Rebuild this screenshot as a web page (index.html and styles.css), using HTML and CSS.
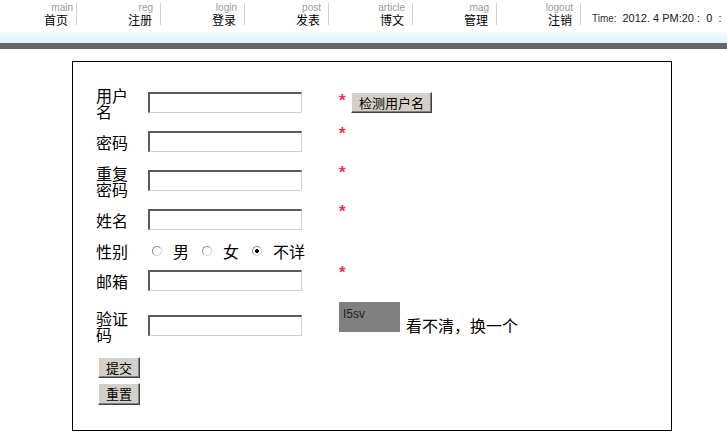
FILE: index.html
```html
<!DOCTYPE html>
<html lang="zh-CN">
<head>
<meta charset="utf-8">
<title>注册</title>
<link rel="stylesheet" href="styles.css">
</head>
<body>
<div class="topbar">
  <div class="nav-item first"><div class="nav-en">main</div><div class="nav-zh">首页</div></div>
  <div class="nav-item"><div class="nav-en">reg</div><div class="nav-zh">注册</div></div>
  <div class="nav-item"><div class="nav-en">login</div><div class="nav-zh">登录</div></div>
  <div class="nav-item"><div class="nav-en">post</div><div class="nav-zh">发表</div></div>
  <div class="nav-item"><div class="nav-en">article</div><div class="nav-zh">博文</div></div>
  <div class="nav-item"><div class="nav-en">mag</div><div class="nav-zh">管理</div></div>
  <div class="nav-item"><div class="nav-en">logout</div><div class="nav-zh">注销</div></div>
  <div class="clock">Time: <span class="clock-val">2012. 4 PM:20 :&nbsp; 0&nbsp; :</span></div>
</div>
<div class="band"></div>
<div class="bar"></div>

<div class="panel">
  <form class="form-grid">
    <div class="field-label">用户名</div>
    <input class="text-input" type="text">
    <div class="hint hint-mid"><span class="star star-btn">*</span> <button type="button" class="btn btn-check">检测用户名</button></div>

    <div class="field-label">密码</div>
    <input class="text-input" type="password">
    <div class="hint"><span class="star">*</span></div>

    <div class="field-label">重复密码</div>
    <input class="text-input" type="password">
    <div class="hint"><span class="star">*</span></div>

    <div class="field-label">姓名</div>
    <input class="text-input" type="text">
    <div class="hint"><span class="star">*</span></div>

    <div class="field-label">性别</div>
    <div class="gender">
      <label class="opt"><input class="radio" type="radio" name="sex">男</label>
      <label class="opt"><input class="radio" type="radio" name="sex">女</label>
      <label class="opt"><input class="radio" type="radio" name="sex" checked>不详</label>
    </div>

    <div class="field-label">邮箱</div>
    <input class="text-input" type="text">
    <div class="hint hint-tight"><span class="star">*</span></div>

    <div class="field-label">验证码</div>
    <input class="text-input" type="text">
    <div class="captcha-cell"><span class="captcha">I5sv</span><span class="refresh">看不清，换一个</span></div>
  </form>
  <div class="actions">
    <button type="button" class="btn">提交</button>
    <button type="button" class="btn btn-second">重置</button>
  </div>
</div>
</body>
</html>
```

FILE: styles.css
```css
html, body {
  margin: 0;
  padding: 0;
  background: #fff;
}

body {
  font-family: "Liberation Sans", "Noto Sans CJK SC", sans-serif;
  color: #000;
}

/* ---------- header ---------- */
.topbar {
  display: flex;
  height: 32px;
}

.nav-item {
  flex: none;
  width: 83px;
  height: 22px;
  margin-top: 3px;
  border-right: 1px solid #cfcfcf;
  text-align: right;
}

.nav-item.first {
  width: 76px;
}

.nav-en {
  font-family: "Liberation Sans", sans-serif;
  font-size: 10px;
  line-height: 9px;
  color: #9a9a9a;
  padding-right: 7px;
}

.nav-item.first .nav-en {
  padding-right: 3px;
}

.nav-zh {
  font-family: "Noto Sans CJK SC", sans-serif;
  font-size: 12px;
  line-height: 12px;
  margin-top: 2px;
  padding-right: 8px;
  color: #000;
}

.clock {
  flex: none;
  margin: 13px 0 0 11px;
  font-family: "Liberation Sans", sans-serif;
  font-size: 10px;
  line-height: 10px;
  color: #333;
  white-space: nowrap;
}

.clock-val {
  margin-left: 3px;
  font-size: 11px;
  color: #14142a;
}

.band {
  height: 11px;
  background: linear-gradient(#f6fcfe, #dcf4fb);
}

.bar {
  height: 6px;
  background: #666;
}

/* ---------- panel ---------- */
.panel {
  box-sizing: border-box;
  width: 600px;
  height: 370px;
  margin: 12px 0 0 72px;
  border: 1px solid #000;
  padding: 21px 0 0 23px;
}

.form-grid {
  display: grid;
  grid-template-columns: 52px 191px auto;
  grid-template-rows: 39px 39px 39px 39px 23px 37px 53px;
  margin: 0;
}

.field-label {
  align-self: center;
  width: 34px;
  font-family: "Noto Sans CJK SC", sans-serif;
  font-size: 16px;
  line-height: 16px;
}

.text-input {
  align-self: center;
  justify-self: start;
  box-sizing: border-box;
  width: 154px;
  height: 21px;
  margin: 0;
  padding: 0 2px;
  border-style: solid;
  border-width: 2px 1px 1px 2px;
  border-color: #5a5a5a #d4d0c8 #d4d0c8 #5a5a5a;
  background: #fff;
  outline: none;
}

.hint {
  align-self: start;
  padding-top: 3px;
  line-height: 18px;
}

.hint-mid {
  align-self: center;
  padding-top: 0;
  white-space: nowrap;
}

.hint-tight {
  padding-top: 2px;
}

.star {
  font-family: "Liberation Sans", sans-serif;
  font-size: 17px;
  font-weight: bold;
  line-height: 18px;
  color: #f2334d;
}

.star-btn {
  position: relative;
  top: -2px;
}

.btn {
  box-sizing: border-box;
  height: 21px;
  margin: 0;
  padding: 0 7px;
  font-family: "Noto Sans CJK SC", sans-serif;
  font-size: 13px;
  line-height: 18px;
  color: #000;
  background: #d4d0c8;
  border: 1px solid;
  border-color: #fff #404040 #404040 #fff;
  box-shadow: inset -1px -1px 0 #808080;
  border-radius: 0;
}

.btn-check {
  margin-left: 1px;
}

/* gender */
.gender {
  grid-column: 2 / 4;
  align-self: center;
  display: flex;
  align-items: center;
  padding-left: 4px;
}

.opt {
  display: flex;
  align-items: center;
  gap: 11px;
  margin-right: 13px;
  font-family: "Noto Sans CJK SC", sans-serif;
  font-size: 16px;
  line-height: 16px;
}

.radio {
  -webkit-appearance: none;
  appearance: none;
  box-sizing: border-box;
  width: 10px;
  height: 10px;
  margin: 0;
  border-radius: 50%;
  border: 1px solid;
  border-color: #8a8a8a #d4d0c8 #d4d0c8 #8a8a8a;
  background: #fff;
}

.radio:checked {
  background: radial-gradient(circle, #000 0 1.6px, #fff 2.2px);
}

/* captcha */
.captcha-cell {
  align-self: start;
  padding-top: 3px;
  font-family: "Noto Sans CJK SC", sans-serif;
  font-size: 16px;
  line-height: 18px;
  white-space: nowrap;
}

.captcha {
  display: inline-block;
  box-sizing: border-box;
  width: 61px;
  height: 30px;
  padding: 5px 0 0 4px;
  overflow: hidden;
  background: #808080;
  font-family: "Liberation Sans", sans-serif;
  font-size: 12px;
  line-height: 14px;
  color: #1e1e1e;
}

.refresh {
  margin-left: 6px;
}

/* actions */
.actions {
  margin-top: 5px;
  padding-left: 2px;
}

.actions .btn {
  display: block;
}

.actions .btn-second {
  height: 22px;
  margin-top: 5px;
}
```
